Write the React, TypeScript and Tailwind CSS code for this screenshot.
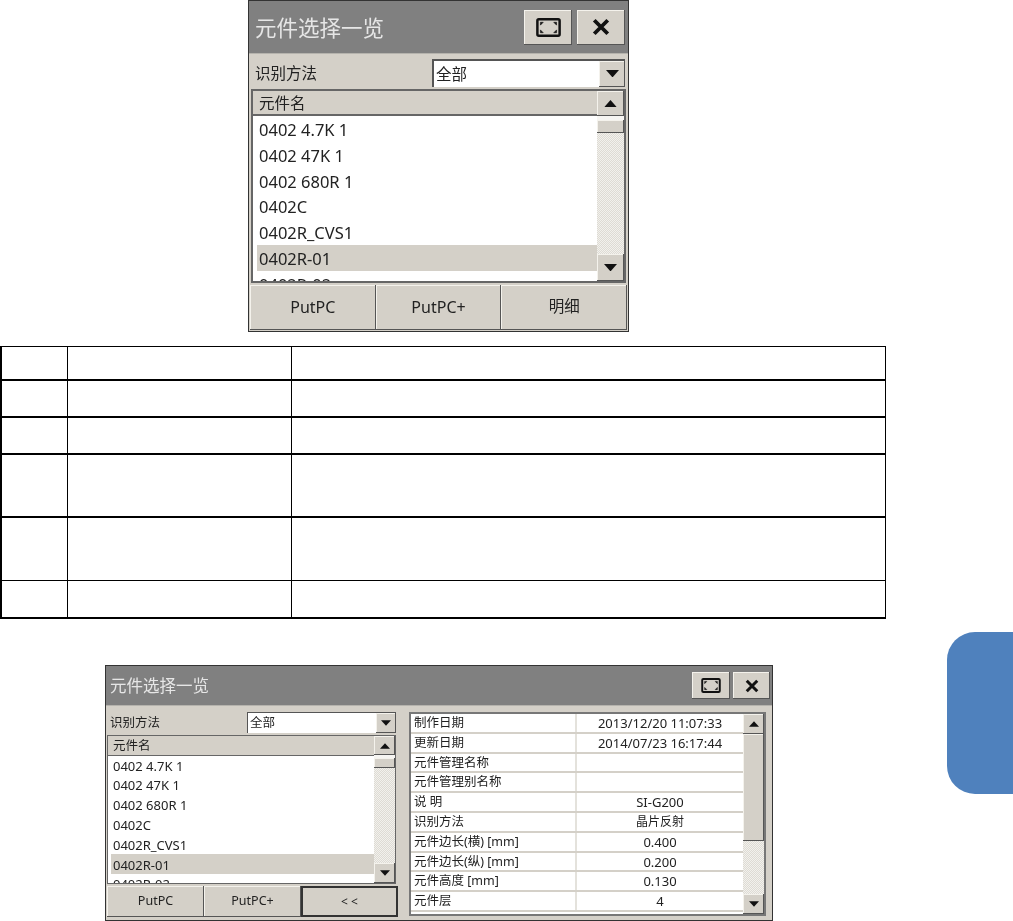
import React from "react";

const font = "font-['Noto_Sans','Noto_Sans_CJK_SC',sans-serif]";
const raised =
  "bg-[#d4d0c8] shadow-[inset_-1px_-1px_0_#555,inset_1px_1px_0_#f4f2ec]";
const track =
  "bg-[repeating-conic-gradient(#dedbd4_0_25%,#f2f1ed_0_50%)] bg-[length:2px_2px]";

const names = [
  "0402 4.7K 1",
  "0402 47K 1",
  "0402 680R 1",
  "0402C",
  "0402R_CVS1",
  "0402R-01",
  "0402R-02",
];

const details = [
  ["制作日期", "2013/12/20 11:07:33"],
  ["更新日期", "2014/07/23 16:17:44"],
  ["元件管理名称", ""],
  ["元件管理别名称", ""],
  ["说 明", "SI-G200"],
  ["识别方法", "晶片反射"],
  ["元件边长(横) [mm]", "0.400"],
  ["元件边长(纵) [mm]", "0.200"],
  ["元件高度 [mm]", "0.130"],
  ["元件层", "4"],
];

const tableRows = [
  "h-[35px] border-t border-b-2",
  "h-[37px] border-b-2",
  "h-[37px] border-b-2",
  "h-[63px] border-b-2",
  "h-[63px] border-b",
  "h-[38px] border-b-2",
];

const Arrow = ({ up, size }: { up?: boolean; size: number }) => (
  <svg width={size} height={size / 2 + 1} viewBox="0 0 14 8">
    <path d={up ? "M7 0 L14 8 L0 8 Z" : "M0 0 L14 0 L7 8 Z"} fill="#111" />
  </svg>
);

const ExpandIcon = ({ w, h }: { w: number; h: number }) => (
  <svg width={w} height={h} viewBox="0 0 26 20" fill="none">
    <rect x="1.3" y="1.3" width="23.4" height="17.4" rx="1.5" stroke="#111" strokeWidth="2.6" />
    <path
      d="M4.5 4.5h3l-3 3zM21.5 4.5h-3l3 3zM4.5 15.5h3l-3-3zM21.5 15.5h-3l3-3z"
      fill="#111"
      stroke="#111"
      strokeWidth="0.6"
    />
  </svg>
);

const CloseIcon = ({ size }: { size: number }) => (
  <svg width={size} height={size} viewBox="0 0 16 16">
    <path d="M2 2 L14 14 M14 2 L2 14" stroke="#111" strokeWidth="3.4" />
  </svg>
);

const App = () => {
  return (
    <div className={`h-[921px] overflow-hidden bg-white text-[#222] ${font}`}>
      <div className="ml-[248px] flex h-[332px] w-[381px] flex-col border border-[#333] bg-[#d4d0c8] blur-[0.35px]">
        <div className="flex h-[53px] shrink-0 items-center border-b border-[#b5b3ad] bg-[#808080] pl-[6px] pr-[3px]">
          <span className="mt-[3px] text-[21.5px] text-[#e6e6e6]">元件选择一览</span>
          <button className={`ml-auto flex h-[35px] w-[48px] items-center justify-center ${raised}`}>
            <ExpandIcon w={25} h={19} />
          </button>
          <button className={`ml-[5px] flex h-[35px] w-[48px] items-center justify-center ${raised}`}>
            <CloseIcon size={18} />
          </button>
        </div>

        <div className="flex h-[35px] shrink-0 items-center pl-[6px] pr-[3px] pt-[2px]">
          <span className="mt-[3px] text-[15.5px]">识别方法</span>
          <div className="ml-auto flex h-[28px] w-[193px] border-l-2 border-t-2 border-[#555] bg-white">
            <span className="pl-[2px] pt-[1px] text-[15.5px] leading-[24px]">全部</span>
            <div className={`ml-auto flex w-[26px] items-center justify-center ${raised}`}>
              <Arrow size={13} />
            </div>
          </div>
        </div>

        <div className="mx-[2px] flex h-[194px] shrink-0 border-2 border-[#666] bg-white">
          <div className="flex min-w-0 flex-1 flex-col overflow-hidden">
            <div className="flex h-[25px] shrink-0 items-center border-b-2 border-[#666] bg-[#d4d0c8] pl-[6px] pt-[3px] text-[15.5px]">
              元件名
            </div>
            {names.map((name) => (
              <div
                key={name}
                className={`ml-[4px] flex h-[25.8px] shrink-0 items-center pl-[2px] pt-[3px] text-[16.5px] ${
                  name === "0402R-01" ? "bg-[#d4d0c8]" : ""
                }`}
              >
                {name}
              </div>
            ))}
          </div>
          <div className="flex w-[27px] shrink-0 flex-col bg-[#f6f5f2]">
            <div className={`flex h-[25px] shrink-0 items-center justify-center ${raised}`}>
              <Arrow up size={13} />
            </div>
            <div className={`mt-[4px] h-[13px] shrink-0 ${raised}`} />
            <div className={`flex-1 ${track}`} />
            <div className={`flex h-[27px] shrink-0 items-center justify-center ${raised}`}>
              <Arrow size={13} />
            </div>
          </div>
        </div>

        <div className="mt-[2px] flex h-[45px] shrink-0 px-[1px]">
          <button className={`flex-1 pb-[2px] text-[16px] ${raised}`}>PutPC</button>
          <button className={`flex-1 pb-[2px] text-[16px] ${raised}`}>PutPC+</button>
          <button className={`flex-1 pb-[2px] text-[15.5px] ${raised}`}>明细</button>
        </div>
      </div>

      <table className="mt-[14px] w-[886px] table-fixed border-separate border-spacing-0">
        <tbody>
          {tableRows.map((row, i) => (
            <tr key={i}>
              <td className={`w-[68px] border-l-2 border-r border-black ${row}`} />
              <td className={`w-[224px] border-r border-black ${row}`} />
              <td className={`border-r border-black ${row}`} />
            </tr>
          ))}
        </tbody>
      </table>

      <div className="flex items-start">
        <div className="ml-[105px] mt-[46px] flex h-[256px] w-[668px] flex-col border border-[#333] bg-[#d4d0c8] blur-[0.35px]">
          <div className="flex h-[40px] shrink-0 items-center border-b border-[#b5b3ad] bg-[#808080] pl-[4px] pr-[2px]">
            <span className="mt-[2px] text-[16.5px] text-[#e6e6e6]">元件选择一览</span>
            <button className={`ml-auto flex h-[27px] w-[38px] items-center justify-center ${raised}`}>
              <ExpandIcon w={20} h={15} />
            </button>
            <button className={`ml-[3px] flex h-[27px] w-[37px] items-center justify-center ${raised}`}>
              <CloseIcon size={14} />
            </button>
          </div>

          <div className="flex min-h-0 flex-1">
            <div className="flex w-[292px] shrink-0 flex-col">
              <div className="flex h-[29px] shrink-0 items-center pl-[4px] pr-[2px] pt-[3px]">
                <span className="mt-[2px] text-[12.5px]">识别方法</span>
                <div className="ml-auto flex h-[21px] w-[149px] border-l border-t border-[#555] bg-white">
                  <span className="pl-[2px] text-[12.5px] leading-[19px]">全部</span>
                  <div className={`ml-auto flex w-[20px] items-center justify-center ${raised}`}>
                    <Arrow size={10} />
                  </div>
                </div>
              </div>

              <div className="ml-[1px] mr-[2px] flex h-[149px] shrink-0 border-[1.5px] border-[#666] bg-white">
                <div className="flex min-w-0 flex-1 flex-col overflow-hidden">
                  <div className="flex h-[19.5px] shrink-0 items-center border-b-[1.5px] border-[#666] bg-[#d4d0c8] pl-[5px] pt-[2px] text-[12.5px]">
                    元件名
                  </div>
                  {names.map((name) => (
                    <div
                      key={name}
                      className={`ml-[3px] flex h-[19.8px] shrink-0 items-center pl-[2px] pt-[2px] text-[13px] ${
                        name === "0402R-01" ? "bg-[#d4d0c8]" : ""
                      }`}
                    >
                      {name}
                    </div>
                  ))}
                </div>
                <div className="flex w-[21px] shrink-0 flex-col bg-[#f6f5f2]">
                  <div className={`flex h-[19px] shrink-0 items-center justify-center ${raised}`}>
                    <Arrow up size={10} />
                  </div>
                  <div className={`mt-[3px] h-[10px] shrink-0 ${raised}`} />
                  <div className={`flex-1 ${track}`} />
                  <div className={`flex h-[20px] shrink-0 items-center justify-center ${raised}`}>
                    <Arrow size={10} />
                  </div>
                </div>
              </div>

              <div className="mt-[2px] flex h-[31px] shrink-0 pl-[1px]">
                <button className={`w-[97px] shrink-0 text-[12.5px] ${raised}`}>PutPC</button>
                <button className={`w-[97px] shrink-0 text-[12.5px] ${raised}`}>PutPC+</button>
                <button className="w-[97px] shrink-0 border-2 border-[#333] bg-[#d4d0c8] text-[12px]">
                  {"< <"}
                </button>
              </div>
            </div>

            <div className="ml-[11px] mt-[6px] flex h-[204px] w-[357px] shrink-0 border-2 border-[#777] bg-white">
              <div className="min-w-0 flex-1 overflow-hidden">
                {details.map(([label, value]) => (
                  <div key={label} className="flex h-[19.8px] border-b-2 border-[#d4d0c8] leading-[18px]">
                    <div className="w-[166px] shrink-0 border-r-2 border-[#e4e2dc] pl-[3px] text-[12.5px]">{label}</div>
                    <div className={`flex-1 text-center ${value === "晶片反射" ? "text-[12px]" : "text-[13px]"}`}>
                      {value}
                    </div>
                  </div>
                ))}
              </div>
              <div className="flex w-[21px] shrink-0 flex-col">
                <div className={`flex h-[20px] shrink-0 items-center justify-center ${raised}`}>
                  <Arrow up size={10} />
                </div>
                <div className={`h-[107px] shrink-0 ${raised}`} />
                <div className={`flex-1 ${track}`} />
                <div className={`flex h-[20px] shrink-0 items-center justify-center ${raised}`}>
                  <Arrow size={10} />
                </div>
              </div>
            </div>
          </div>
        </div>

        <div className="ml-auto mt-[13px] h-[162px] w-[66px] rounded-l-[28px] bg-[#4f81bd]" />
      </div>
    </div>
  );
};

export default App;
